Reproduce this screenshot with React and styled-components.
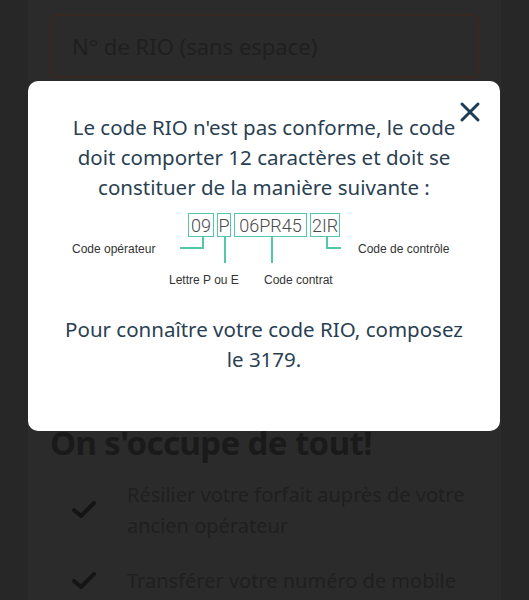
import React from "react";
import styled, { createGlobalStyle } from "styled-components";

const Global = createGlobalStyle`
  html, body { margin: 0; padding: 0; background: #272727; }
  body { font-family: "Noto Sans", "Open Sans", sans-serif; }
  * { box-sizing: border-box; }
`;

const Page = styled.div`
  margin: 0 28px;
  height: 600px;
  background: #2b2b2b;
  padding: 14px 22px 0;
  overflow: hidden;
`;

const Field = styled.div`
  height: 64px;
  border: 2px solid #3a2721;
  border-radius: 6px;
  display: flex;
  align-items: center;
  padding: 0 20px;
  font-size: 22px;
  color: #1f1f1f;
`;

const Heading = styled.h2`
  margin: 343px 0 0;
  font-size: 33px;
  font-weight: 700;
  color: #1a1a1a;
  line-height: 44px;
  letter-spacing: -0.6px;
`;

const List = styled.ul`
  list-style: none;
  margin: 14px 0 0;
  padding: 0;
  display: flex;
  flex-direction: column;
  gap: 24px;
`;

const Item = styled.li`
  display: grid;
  grid-template-columns: 77px 1fr;
  align-items: center;
  font-size: 20px;
  line-height: 31px;
  color: #1f1f1f;
`;

const Check = styled.svg`
  width: 26px;
  height: 20px;
  margin-left: 21px;
`;

const Overlay = styled.div`
  position: fixed;
  inset: 0;
  pointer-events: none;
`;

const Modal = styled.div`
  position: absolute;
  top: 81px;
  left: 28px;
  width: 472px;
  height: 350px;
  background: #fff;
  border-radius: 10px;
  padding: 31px 36px 0;
  color: #2a3f52;
`;

const Close = styled.button`
  position: absolute;
  top: 20px;
  right: 19px;
  width: 22px;
  height: 22px;
  padding: 0;
  border: 0;
  background: none;
`;

const Text = styled.p`
  margin: ${(p) => p.$mt || 0}px 0 0;
  font-size: 20.5px;
  line-height: 30px;
  text-align: center;
`;

const Diagram = styled.div`
  position: relative;
  height: 82px;
  margin-top: 9px;
  padding-top: 2px;
`;

const BoxRow = styled.div`
  display: flex;
  justify-content: center;
  gap: 3px;
`;

const Box = styled.div`
  width: ${(p) => p.$w}px;
  height: 24px;
  border: 1.5px solid #52c7a9;
  display: flex;
  align-items: center;
  justify-content: center;
  font-family: Roboto, "Liberation Sans", Arial, sans-serif;
  font-weight: 300;
  font-size: 18px;
  color: #4a4a4a;
`;

const Line = styled.div`
  position: absolute;
  left: ${(p) => p.$x}px;
  top: ${(p) => p.$y}px;
  width: ${(p) => p.$w || 1.5}px;
  height: ${(p) => p.$h || 1.5}px;
  background: #52c7a9;
`;

const Label = styled.div`
  position: absolute;
  left: ${(p) => p.$x}px;
  top: ${(p) => p.$y}px;
  font-family: "Liberation Sans", Arial, sans-serif;
  font-size: 12px;
  line-height: 16px;
  color: #333;
  white-space: nowrap;
`;

const CheckIcon = () => (
  <Check viewBox="0 0 26 20">
    <path d="M3 10 L10 16 L23 3" fill="none" stroke="#151515" strokeWidth="4" strokeLinecap="round" strokeLinejoin="round" />
  </Check>
);

export default function App() {
  return (
    <>
      <Global />
      <Page>
        <Field>N° de RIO (sans espace)</Field>
        <Heading>On s'occupe de tout!</Heading>
        <List>
          <Item>
            <CheckIcon />
            <span>Résilier votre forfait auprès de votre ancien opérateur</span>
          </Item>
          <Item>
            <CheckIcon />
            <span>Transférer votre numéro de mobile</span>
          </Item>
        </List>
      </Page>
      <Overlay>
        <Modal>
          <Close aria-label="Fermer">
            <svg viewBox="0 0 22 22" width="22" height="22">
              <path d="M3 3 L19 19 M19 3 L3 19" stroke="#1d3a56" strokeWidth="3" strokeLinecap="round" />
            </svg>
          </Close>
          <Text>
            Le code RIO n'est pas conforme, le code doit comporter 12 caractères et doit se constituer de la manière suivante :
          </Text>
          <Diagram>
            <BoxRow>
              <Box $w={26}>09</Box>
              <Box $w={14}>P</Box>
              <Box $w={73}>06PR45</Box>
              <Box $w={30}>2IR</Box>
            </BoxRow>
            <Line $x={116} $y={36} $w={24} />
            <Line $x={138} $y={26} $h={11} />
            <Line $x={160} $y={26} $h={26} />
            <Line $x={207} $y={26} $h={26} />
            <Line $x={262} $y={26} $h={11} />
            <Line $x={262} $y={36} $w={15} />
            <Label $x={8} $y={30}>Code opérateur</Label>
            <Label $x={294} $y={30}>Code de contrôle</Label>
            <Label $x={105} $y={61}>Lettre P ou E</Label>
            <Label $x={200} $y={61}>Code contrat</Label>
          </Diagram>
          <Text $mt={21}>Pour connaître votre code RIO, composez le 3179.</Text>
        </Modal>
      </Overlay>
    </>
  );
}
